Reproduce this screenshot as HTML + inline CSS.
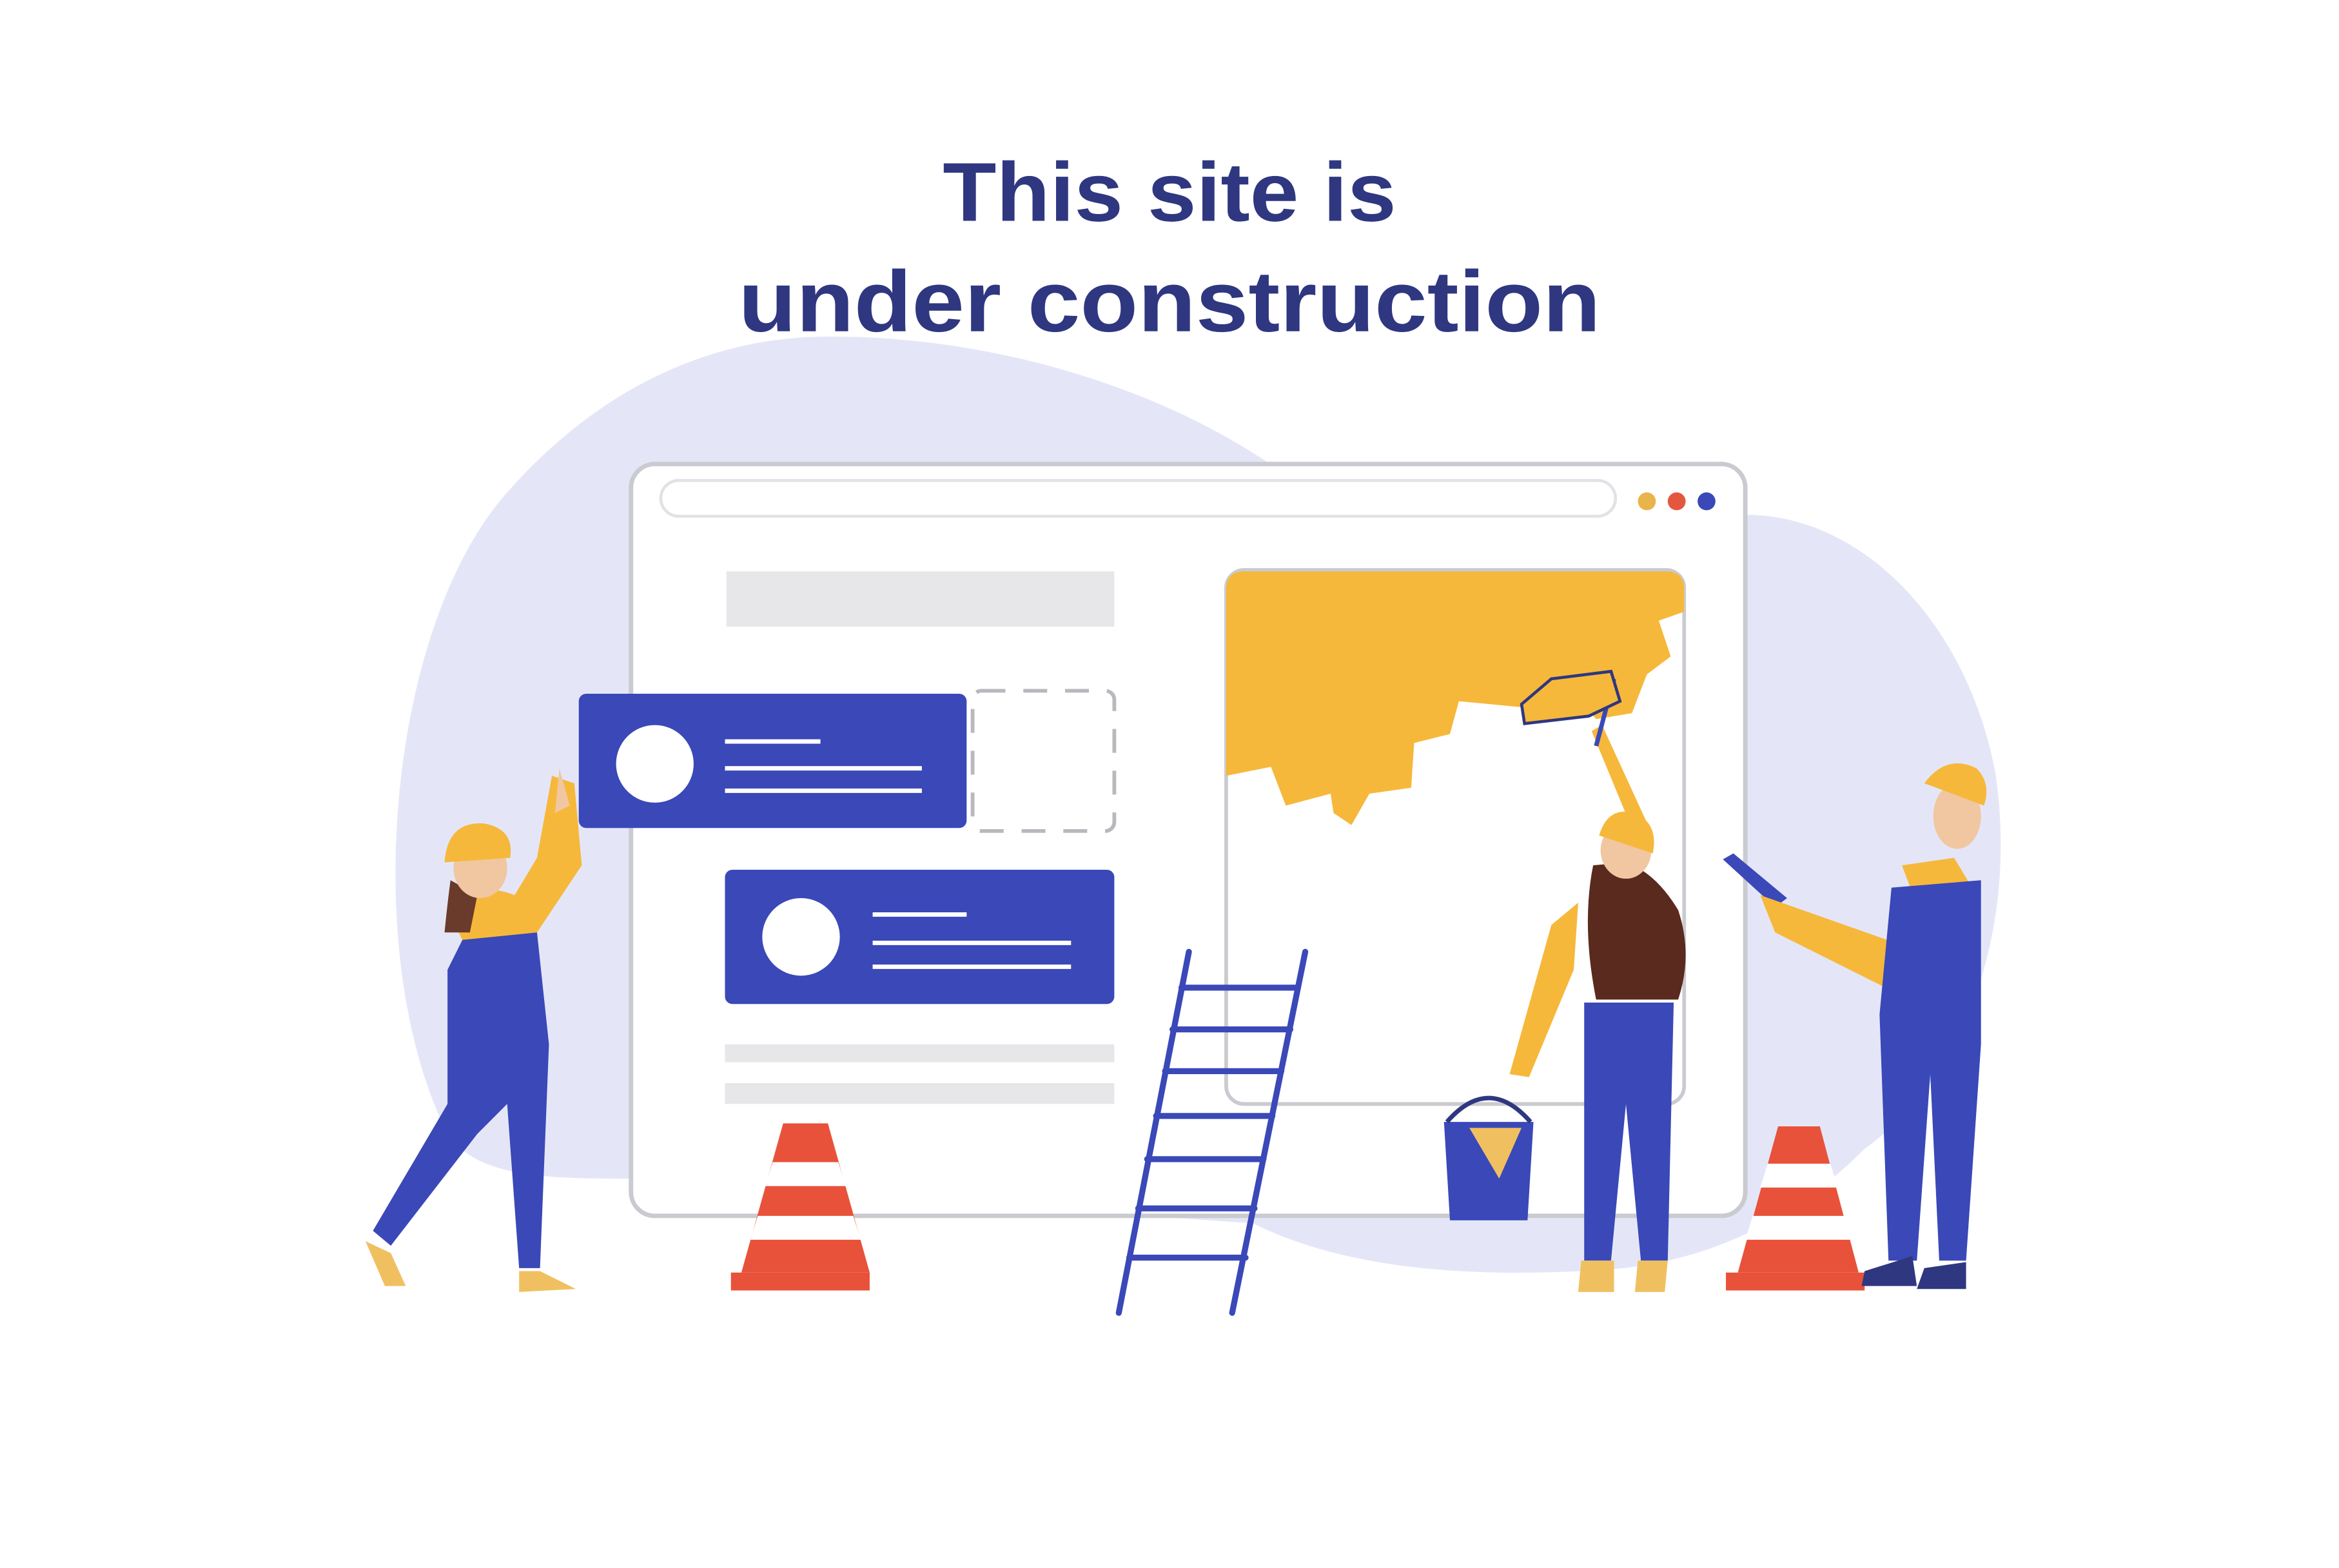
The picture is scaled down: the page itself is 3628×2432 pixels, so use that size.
<!DOCTYPE html>
<html><head><meta charset="utf-8"><style>
html,body{margin:0;padding:0;background:#fff;width:3628px;height:2432px;overflow:hidden}
svg{display:block}
</style></head><body>
<svg width="3628" height="2432" viewBox="0 0 1568 1051" xmlns="http://www.w3.org/2000/svg">
<rect width="1568" height="1051" fill="#fff"/>
<!-- blob -->
<path d="M300 760 C240 640 260 420 340 330 C400 262 470 230 540 226 C640 222 760 250 850 310 L1170 345 C1250 345 1320 420 1338 520 C1352 620 1320 720 1250 770 C1200 820 1140 850 1060 852 C980 856 900 850 840 820 L420 790 C370 790 320 790 300 760 Z" fill="#e4e6f8"/>
<!-- title -->
<g font-family="Liberation Sans, sans-serif" font-weight="bold" fill="#2f3780" text-anchor="middle">
<text x="784" y="148" font-size="56" textLength="304" lengthAdjust="spacingAndGlyphs">This site is</text>
<text x="784" y="222" font-size="58" textLength="578" lengthAdjust="spacingAndGlyphs">under construction</text>
</g>
<!-- browser -->
<rect x="423" y="311" width="747" height="504" rx="16" fill="#fff" stroke="#cacbd0" stroke-width="3"/>
<rect x="443" y="322" width="640" height="24" rx="12" fill="#fff" stroke="#e2e2e6" stroke-width="2"/>
<circle cx="1104" cy="336" r="6" fill="#e9b44c"/>
<circle cx="1124" cy="336" r="6" fill="#e4573f"/>
<circle cx="1144" cy="336" r="6" fill="#3a48b8"/>
<rect x="487" y="383" width="260" height="37" fill="#e7e7e9"/>
<rect x="486" y="700" width="261" height="12" fill="#e7e7e9"/>
<rect x="486" y="726" width="261" height="14" fill="#e7e7e9"/>
<rect x="652" y="463" width="95" height="94" rx="6" fill="none" stroke="#b8b8bd" stroke-width="2.5" stroke-dasharray="16 12"/>
<!-- cards -->
<rect x="388" y="465" width="260" height="90" rx="5" fill="#3a48b8"/>
<circle cx="439" cy="512" r="26" fill="#fff"/>
<g stroke="#fff" stroke-width="3"><line x1="486" y1="497" x2="550" y2="497"/><line x1="486" y1="515" x2="618" y2="515"/><line x1="486" y1="530" x2="618" y2="530"/></g>
<rect x="486" y="583" width="261" height="90" rx="5" fill="#3a48b8"/>
<circle cx="537" cy="628" r="26" fill="#fff"/>
<g stroke="#fff" stroke-width="3"><line x1="585" y1="613" x2="648" y2="613"/><line x1="585" y1="632" x2="718" y2="632"/><line x1="585" y1="648" x2="718" y2="648"/></g>
<!-- right panel -->
<rect x="822" y="382" width="307" height="358" rx="12" fill="#fff" stroke="#cacbd0" stroke-width="2.5"/>
<path d="M834 383 L1117 383 Q1129 383 1129 395 L1129 410 L1112 416 L1120 440 L1104 452 L1094 478 L1070 482 L1060 470 L1030 475 L978 470 L972 492 L948 498 L946 528 L918 532 L906 553 L894 545 L892 532 L862 540 L852 514 L822 520 L822 395 Q822 383 834 383 Z" fill="#f6b83a"/>
<!-- ladder -->
<g stroke="#3a48b8" stroke-width="4" stroke-linecap="round">
<line x1="797" y1="638" x2="750" y2="880"/><line x1="875" y1="638" x2="826" y2="880"/>
<line x1="792" y1="662" x2="870" y2="662"/><line x1="786" y1="690" x2="865" y2="690"/><line x1="781" y1="718" x2="859" y2="718"/><line x1="775" y1="748" x2="853" y2="748"/><line x1="769" y1="777" x2="847" y2="777"/><line x1="763" y1="810" x2="841" y2="810"/><line x1="757" y1="843" x2="835" y2="843"/>
</g>
<!-- cones -->
<g>
<path d="M525 753 L555 753 L583 853 L497 853 Z" fill="#e8523a"/>
<path d="M518 779 L562 779 L567 795 L513 795 Z M508 815 L572 815 L577 831 L503 831 Z" fill="#fff"/>
<rect x="490" y="853" width="93" height="12" fill="#e8523a"/>
<path d="M1192 755 L1220 755 L1246 853 L1165 853 Z" fill="#e8523a"/>
<path d="M1185 780 L1227 780 L1232 796 L1180 796 Z M1175 815 L1237 815 L1242 831 L1170 831 Z" fill="#fff"/>
<rect x="1157" y="853" width="93" height="12" fill="#e8523a"/>
</g>
<!-- left worker -->
<g>
<path d="M370 520 L385 525 L390 580 L350 640 L330 625 L360 575 Z" fill="#f6b83a"/>
<path d="M375 515 L382 540 L372 545 Z" fill="#f0c7a0"/>
<path d="M300 610 Q320 590 345 600 L355 640 L320 650 Z" fill="#f6b83a"/>
<path d="M310 630 L360 625 L368 700 L362 850 L348 850 L340 740 L320 760 L262 835 L250 825 L300 740 L300 650 Z" fill="#3a48b8"/>
<path d="M302 590 Q300 605 298 625 L315 625 L320 600 Z" fill="#6a3a2a"/>
<ellipse cx="322" cy="582" rx="18" ry="20" fill="#f0c7a0"/>
<path d="M298 578 Q300 550 325 552 Q345 556 342 575 Z" fill="#f6b83a"/>
<path d="M245 832 L262 840 L272 862 L258 862 Z" fill="#f0c060"/>
<path d="M348 852 L362 852 L386 864 L348 866 Z" fill="#f0c060"/>
</g>
<!-- painter -->
<g>
<path d="M1067 490 L1074 486 L1108 560 L1098 565 Z" fill="#f6b83a"/>
<line x1="1070" y1="500" x2="1082" y2="455" stroke="#3a48b8" stroke-width="3"/>
<path d="M1020 472 L1040 455 L1080 450 L1086 470 L1065 480 L1022 485 Z" fill="#f6b83a" stroke="#2f3780" stroke-width="2"/>
<path d="M1058 605 L1040 620 L1012 720 L1025 722 L1055 650 Z" fill="#f6b83a"/>
<path d="M1068 580 Q1060 620 1070 670 L1125 670 Q1135 640 1125 610 Q1110 585 1090 578 Z" fill="#5a2a1e"/>
<path d="M1062 672 L1122 672 L1118 845 L1100 845 L1090 740 L1080 845 L1062 845 Z" fill="#3a48b8"/>
<ellipse cx="1090" cy="570" rx="17" ry="19" fill="#f0c7a0"/>
<path d="M1072 560 Q1078 540 1096 545 Q1112 552 1108 572 Z" fill="#f6b83a"/>
<path d="M1060 845 L1082 845 L1082 866 L1058 866 Z M1098 845 L1118 845 L1116 866 L1096 866 Z" fill="#f0c060"/>
<path d="M968 752 L1028 752 L1024 818 L972 818 Z" fill="#3a48b8"/>
<path d="M970 752 Q998 720 1026 752" fill="none" stroke="#2f3780" stroke-width="3"/>
<path d="M985 756 L1020 756 L1005 790 Z" fill="#f0c060"/>
</g>
<!-- right worker -->
<g>
<path d="M1155 576 L1162 572 L1198 602 L1190 608 Z" fill="#3a48b8"/>
<path d="M1180 600 L1265 630 L1290 600 L1300 620 L1270 665 L1190 625 Z" fill="#f6b83a"/>
<path d="M1275 580 L1310 575 L1325 600 L1320 630 L1290 620 Z" fill="#f6b83a"/>
<path d="M1268 595 L1328 590 L1328 700 L1318 845 L1300 845 L1294 720 L1285 845 L1266 845 L1260 680 Z" fill="#3a48b8"/>
<ellipse cx="1312" cy="547" rx="16" ry="22" fill="#f0c7a0"/>
<path d="M1290 525 Q1305 505 1325 515 Q1335 525 1330 540 Z" fill="#f6b83a"/>
<path d="M1250 852 L1282 842 L1285 862 L1248 862 Z M1290 850 L1318 846 L1318 864 L1285 864 Z" fill="#2f3780"/>
</g>
</svg>
</body></html>
